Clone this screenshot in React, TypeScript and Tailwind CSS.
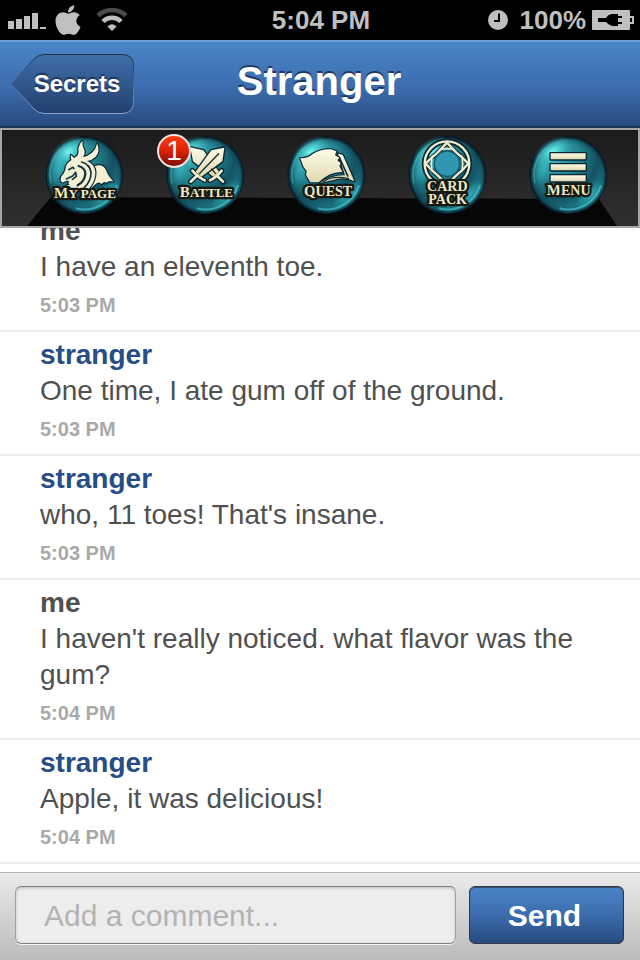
import type { ReactNode } from "react";
import { FaApple } from "react-icons/fa";

type Message = { author: "me" | "stranger"; text: string; time: string };

const messages: Message[] = [
  { author: "me", text: "I have an eleventh toe.", time: "5:03 PM" },
  { author: "stranger", text: "One time, I ate gum off of the ground.", time: "5:03 PM" },
  { author: "stranger", text: "who, 11 toes! That's insane.", time: "5:03 PM" },
  { author: "me", text: "I haven't really noticed. what flavor was the gum?", time: "5:04 PM" },
  { author: "stranger", text: "Apple, it was delicious!", time: "5:04 PM" },
];

function StatusBar() {
  return (
    <div className="grid h-10 shrink-0 grid-cols-[1fr_auto_1fr] items-center bg-black pr-1.5 pl-2 text-[26px] leading-10 font-bold text-[#bfbfbf]">
      <div className="flex items-center">
        <svg className="h-10 w-[38px]" viewBox="0 0 38 40" fill="currentColor" aria-label="Signal">
          <path d="M0 21h6v8H0zM8 19h6v10H8zM16 16h6v13h-6zM24 13h6v16h-6zM32 27h6v2h-6z" />
        </svg>
        <FaApple className="ml-2 h-[34px] w-7" aria-label="Carrier" />
        <svg className="ml-3.5 h-10 w-8" viewBox="0 0 32 40" fill="none" aria-label="Wi-Fi">
          <path d="M2 15.500C10 8 22 8 30 15.500" stroke="#4c4c4c" strokeWidth="4.500" />
          <path d="M7 21.500C12 16.500 20 16.500 25 21.500" stroke="#bfbfbf" strokeWidth="4.500" />
          <path d="M11.500 26.500q4.500-4.500 9 0L16 31z" fill="#bfbfbf" />
        </svg>
      </div>
      <span>5:04 PM</span>
      <div className="flex items-center justify-end">
        <svg className="mr-3 size-5" viewBox="0 0 20 20" aria-label="Alarm">
          <circle cx="10" cy="10" r="10" fill="#bfbfbf" />
          <path d="M11 3.500V11H6" fill="none" stroke="#000" strokeWidth="2" />
        </svg>
        <span>100%</span>
        <svg className="ml-1.5 h-5 w-[42px]" viewBox="0 0 42 20" aria-label="Battery charging">
          <rect width="38" height="20" rx="1" fill="#bfbfbf" />
          <path d="M38 7h3v6h-3" fill="none" stroke="#bfbfbf" strokeWidth="2" />
          <path d="M6 8h8q2-4 7-4h5v2h4v2h-4v4h4v2h-4v2h-5q-3 0-7-4H6z" fill="#000" />
        </svg>
      </div>
    </div>
  );
}

function NavBar() {
  return (
    <header className="grid h-[88px] shrink-0 grid-cols-[1fr_auto_1fr] items-center border-t-2 border-b-2 border-t-[#6f9fd6] border-b-[#1b3157] bg-linear-to-b from-[#4a86c8] via-[#3c6cad] via-55% to-[#274b80] pr-3 pl-2.5 text-white">
      <button type="button" className="relative h-[60px] w-[124px] pl-2.5 text-2xl font-bold">
        <svg className="absolute inset-0 size-full" viewBox="0 0 124 60" aria-hidden="true">
          <defs>
            <linearGradient id="back-fill" x2="0" y2="1">
              <stop offset="0" stopColor="#3f70aa" />
              <stop offset="1" stopColor="#233f6e" />
            </linearGradient>
            <linearGradient id="back-edge" x2="0" y2="1">
              <stop offset="0" stopColor="#232f42" />
              <stop offset="0.500" stopColor="#48658f" />
              <stop offset="1" stopColor="#8aa3c6" />
            </linearGradient>
          </defs>
          <path
            d="M1 30C8 23 17 13 23 6Q28 .500 34 .500H112Q123.500 .500 123.500 11V48Q123.500 59.500 112 59.500H34Q28 59.500 23 54C17 47 8 37 1 30Z"
            fill="url(#back-fill)"
            stroke="url(#back-edge)"
          />
        </svg>
        <span className="relative [text-shadow:0_-2px_1px_#1e355c]">Secrets</span>
      </button>
      <h1 className="pb-1.5 text-[40px] leading-12 font-bold [text-shadow:0_-2px_0_#20395f]">Stranger</h1>
    </header>
  );
}

function Orb({ label, children }: { label: string; children: ReactNode }) {
  return (
    <button type="button" aria-label={label} className="relative block size-[79px] shrink-0">
      <svg className="block size-full" viewBox="0 0 237 237">
        <circle cx="118" cy="118" r="117" fill="#0a1c26" />
        <circle cx="118" cy="118" r="112" fill="url(#orb-body)" />
        <circle cx="118" cy="118" r="112" fill="url(#orb-rim)" />
        <ellipse cx="70" cy="48" rx="64" ry="38" fill="url(#orb-shine)" transform="rotate(-36 70 48)" />
        <ellipse cx="44" cy="95" rx="26" ry="52" fill="url(#orb-glow)" transform="rotate(12 44 95)" />
        <ellipse cx="184" cy="176" rx="62" ry="28" fill="url(#orb-glow)" transform="rotate(-45 184 176)" />
        <path d="M18 142A103 103 0 0 1 55 34" fill="none" stroke="#54c4cb" strokeWidth="4" opacity=".5" />
        <path d="M92 217A102 102 0 0 0 216 148" fill="none" stroke="#4fd0d6" strokeWidth="6" opacity=".6" />
        {children}
      </svg>
    </button>
  );
}

function OrbLabel({ x, y, size, children }: { x: number; y: number; size: number; children: ReactNode }) {
  return (
    <text
      x={x}
      y={y}
      fontSize={size}
      textAnchor="middle"
      fill="#ece8c6"
      stroke="#17180f"
      strokeWidth="14"
      strokeLinejoin="round"
      paintOrder="stroke"
      className="font-['Liberation_Serif',serif] font-bold"
    >
      {children}
    </text>
  );
}

function OrbDefs() {
  return (
    <svg className="absolute size-0" aria-hidden="true">
      <defs>
        <radialGradient id="orb-body" cx=".3" cy=".22" r=".85">
          <stop offset="0" stopColor="#40b6c0" />
          <stop offset=".4" stopColor="#23838f" />
          <stop offset=".7" stopColor="#145364" />
          <stop offset="1" stopColor="#1f8792" />
        </radialGradient>
        <radialGradient id="orb-rim">
          <stop offset=".82" stopColor="#0c2c3d" stopOpacity="0" />
          <stop offset=".94" stopColor="#0c3040" stopOpacity=".3" />
          <stop offset="1" stopColor="#081b2a" stopOpacity=".9" />
        </radialGradient>
        <radialGradient id="orb-shine">
          <stop offset="0" stopColor="#78f6f0" />
          <stop offset=".4" stopColor="#56d8d8" stopOpacity=".7" />
          <stop offset="1" stopColor="#38b3ba" stopOpacity="0" />
        </radialGradient>
        <radialGradient id="orb-glow">
          <stop offset="0" stopColor="#38b8c2" stopOpacity=".8" />
          <stop offset="1" stopColor="#2fa9b2" stopOpacity="0" />
        </radialGradient>
        <linearGradient id="cream" x2="0" y2="1">
          <stop offset="0" stopColor="#fdfbe9" />
          <stop offset="1" stopColor="#dfd9b0" />
        </linearGradient>
      </defs>
    </svg>
  );
}

function GameBar() {
  return (
    <nav
      aria-label="Game"
      className="relative h-[100px] shrink-0 border-2 border-[#a6a6a6] bg-linear-to-b from-[#1b1b1b] to-[#303030]"
    >
      <div className="absolute right-[21px] bottom-0 left-[25px] h-[29px] bg-[#060606] [clip-path:polygon(24px_0,calc(100%-18px)_2px,100%_100%,0_100%)]" />
      <OrbDefs />
      <div className="relative flex justify-between pt-1.5 pr-[30px] pl-[43px]">
        <Orb label="My page">
          <g transform="translate(-30 -18)" strokeLinejoin="round" strokeLinecap="round">
            <g fill="#f3f0d6" stroke="#0a2630" strokeWidth="7" paintOrder="stroke">
              <path d="M178 109Q203 99 213 120Q218 137 236 155Q222 150 215 158Q207 152 200 162Q190 151 178 166L166 176Q188 140 178 109Z" />
              <path d="M109 90Q106 82 108 75L117 84Q134 76 130 60Q131 44 142 32Q141 49 148 60Q151 72 144 81Q160 78 170 69Q183 58 186 40Q197 64 182 80Q171 91 156 93Q178 101 181 125Q183 152 160 178H86Q92 165 104 164Q97 160 103 153Q91 150 86 157Q76 156 77 149Q75 143 82 136Q91 126 93 108Q99 96 109 90Z" />
            </g>
            <g fill="none" stroke="#14343c">
              <path d="M140 96Q166 104 168 128Q168 154 148 172" strokeWidth="5" />
              <path d="M131 108Q151 114 151 132Q149 154 128 166" strokeWidth="7" />
              <path d="M101 119L114 112L117 116" strokeWidth="5" />
              <path d="M94 147L113 138L122 127L124 139L112 148" strokeWidth="5" />
            </g>
          </g>
          <OrbLabel x={120} y={185} size={46}>
            M<tspan fontSize="39">Y PAGE</tspan>
          </OrbLabel>
        </Orb>

        <div className="relative">
          <Orb label="Battle">
            <g transform="translate(-48 -18)" strokeLinejoin="round" strokeLinecap="round">
              <g fill="none" stroke="#0a2630" strokeWidth="16">
                <path d="M180 151Q198 143 215 122M202 138L219 155" />
                <path d="M164 151Q146 143 127 122M140 138L122 155" />
              </g>
              <g fill="url(#cream)" stroke="#0a2630" strokeWidth="8" paintOrder="stroke">
                <path d="M121 52L160 61L207 125L190 140L129 94Z" />
                <path d="M223 53L184 61L137 125L154 140L217 94Z" />
              </g>
              <g fill="none" stroke="#efebcd" strokeWidth="8">
                <path d="M180 151Q198 143 215 122M202 138L219 155" />
                <path d="M164 151Q146 143 127 122M140 138L122 155" />
              </g>
              <path d="M206 71L148 131" fill="none" stroke="#1c2c2a" strokeWidth="4" />
              <path d="M185 117L196 130" fill="none" stroke="#1c2c2a" strokeWidth="4" />
            </g>
            <OrbLabel x={121} y={183} size={46}>
              B<tspan fontSize="39">ATTLE</tspan>
            </OrbLabel>
          </Orb>
          <span className="absolute -top-0.5 -left-[9px] flex size-[34px] items-center justify-center rounded-full border-2 border-[#f3dedb] bg-linear-to-b from-[#fb3a13] via-[#dc2106] to-[#781006] text-[28px] leading-none text-white">
            1
          </span>
        </div>

        <Orb label="Quest">
          <g transform="translate(-21 -18)" fill="url(#cream)" stroke="#0a2630" strokeWidth="7" paintOrder="stroke" strokeLinejoin="round">
            <path d="M174 71L188 74L223 154Q192 138 160 150L119 159Q154 135 195 136Z" />
            <path d="M179 84L204 140" fill="none" stroke="#102e38" strokeWidth="5" />
            <path d="M61 85Q82 86 98 72Q120 57 153 58L169 64L165 76L178 83L172 91L182 100L178 107L187 126Q150 124 116 157H91L78 135L80 123L70 110L66 98Z" />
            <path d="M128 156Q158 135 207 146" fill="none" stroke="#182e30" strokeWidth="4" />
          </g>
          <OrbLabel x={123} y={180} size={45}>
            Q<tspan fontSize="42">UEST</tspan>
          </OrbLabel>
        </Orb>

        <Orb label="Card pack">
          <g transform="translate(-24 -18)" fill="none" strokeLinejoin="round">
            <circle cx="141" cy="101" r="67" stroke="#0a2630" strokeWidth="17" />
            <path d="M141 38L113 68Q104 76 96 82L77 101L96 121Q104 128 113 136L141 164L169 136Q178 128 186 121L205 101L186 82Q178 76 169 68Z" stroke="#0a2630" strokeWidth="13" />
            <g stroke="#f0edcf" strokeWidth="7">
              <circle cx="141" cy="101" r="67" />
              <path d="M141 38L113 68Q104 76 96 82L77 101L96 121Q104 128 113 136L141 164L169 136Q178 128 186 121L205 101L186 82Q178 76 169 68Z" />
              <path d="M118 60Q141 52 164 60M98 76Q90 101 98 126M184 76Q192 101 184 126" strokeWidth="5" />
            </g>
            <circle cx="141" cy="101" r="38" fill="#3196b2" stroke="#155569" strokeWidth="4" />
          </g>
          <OrbLabel x={118} y={164} size={42}>CARD</OrbLabel>
          <OrbLabel x={119} y={203} size={42}>PACK</OrbLabel>
        </Orb>

        <Orb label="Menu">
          <g transform="translate(-27 -18)" fill="url(#cream)" stroke="#082430" strokeWidth="8" paintOrder="stroke" strokeLinejoin="round">
            <path d="M92 70H197V88H92Z" />
            <path d="M92 103H197V121H92Z" />
            <path d="M92 136H197V154H92Z" />
          </g>
          <OrbLabel x={119} y={177} size={45}>
            M<tspan fontSize="42">ENU</tspan>
          </OrbLabel>
        </Orb>
      </div>
    </nav>
  );
}

function MessageRow({ message }: { message: Message }) {
  const nameColor = message.author === "me" ? "text-[#505050]" : "text-[#264d86]";
  return (
    <li className="shrink-0 border-b-2 border-[#ededed] px-10 pt-[5px] pb-[5px]">
      <h2 className={`text-[28px] leading-9 font-bold ${nameColor}`}>{message.author}</h2>
      <p className="text-[28px] leading-9 text-[#505050]">{message.text}</p>
      <time className="block text-xl leading-10 font-bold text-[#a9a9a9]">{message.time}</time>
    </li>
  );
}

export default function App() {
  return (
    <div className="flex h-screen flex-col bg-white font-['Liberation_Sans',Arial,sans-serif]">
      <StatusBar />
      <NavBar />
      <GameBar />
      <main className="flex min-h-0 flex-1 flex-col justify-end overflow-hidden pb-2">
        <ul className="flex flex-col">
          {messages.map((message, index) => (
            <MessageRow key={index} message={message} />
          ))}
        </ul>
      </main>
      <form
        onSubmit={(event) => event.preventDefault()}
        className="flex shrink-0 gap-[13px] border-t border-[#b4b4b4] bg-linear-to-b from-[#ebebec] to-[#bdbabb] pt-[13px] pr-4 pb-4 pl-[15px]"
      >
        <input
          type="text"
          aria-label="Comment"
          placeholder="Add a comment..."
          className="h-[58px] min-w-0 flex-1 rounded-md border border-[#a0a0a0] border-t-[#808080] border-b-[#808080] bg-[#ededed] px-7 pt-0.5 text-[30px] text-[#505050] shadow-[inset_0_1px_3px_#b8b8b8,0_1px_0_#f4f4f4] outline-none placeholder:text-[#b3b3b3]"
        />
        <button
          type="submit"
          className="h-[58px] w-[155px] rounded-md border border-[#33373f] bg-linear-to-b from-[#4a86c8] via-[#3c6cad] to-[#274b80] pr-1 text-[30px] font-bold text-white shadow-[inset_0_1px_1px_#33506f]"
        >
          Send
        </button>
      </form>
    </div>
  );
}
